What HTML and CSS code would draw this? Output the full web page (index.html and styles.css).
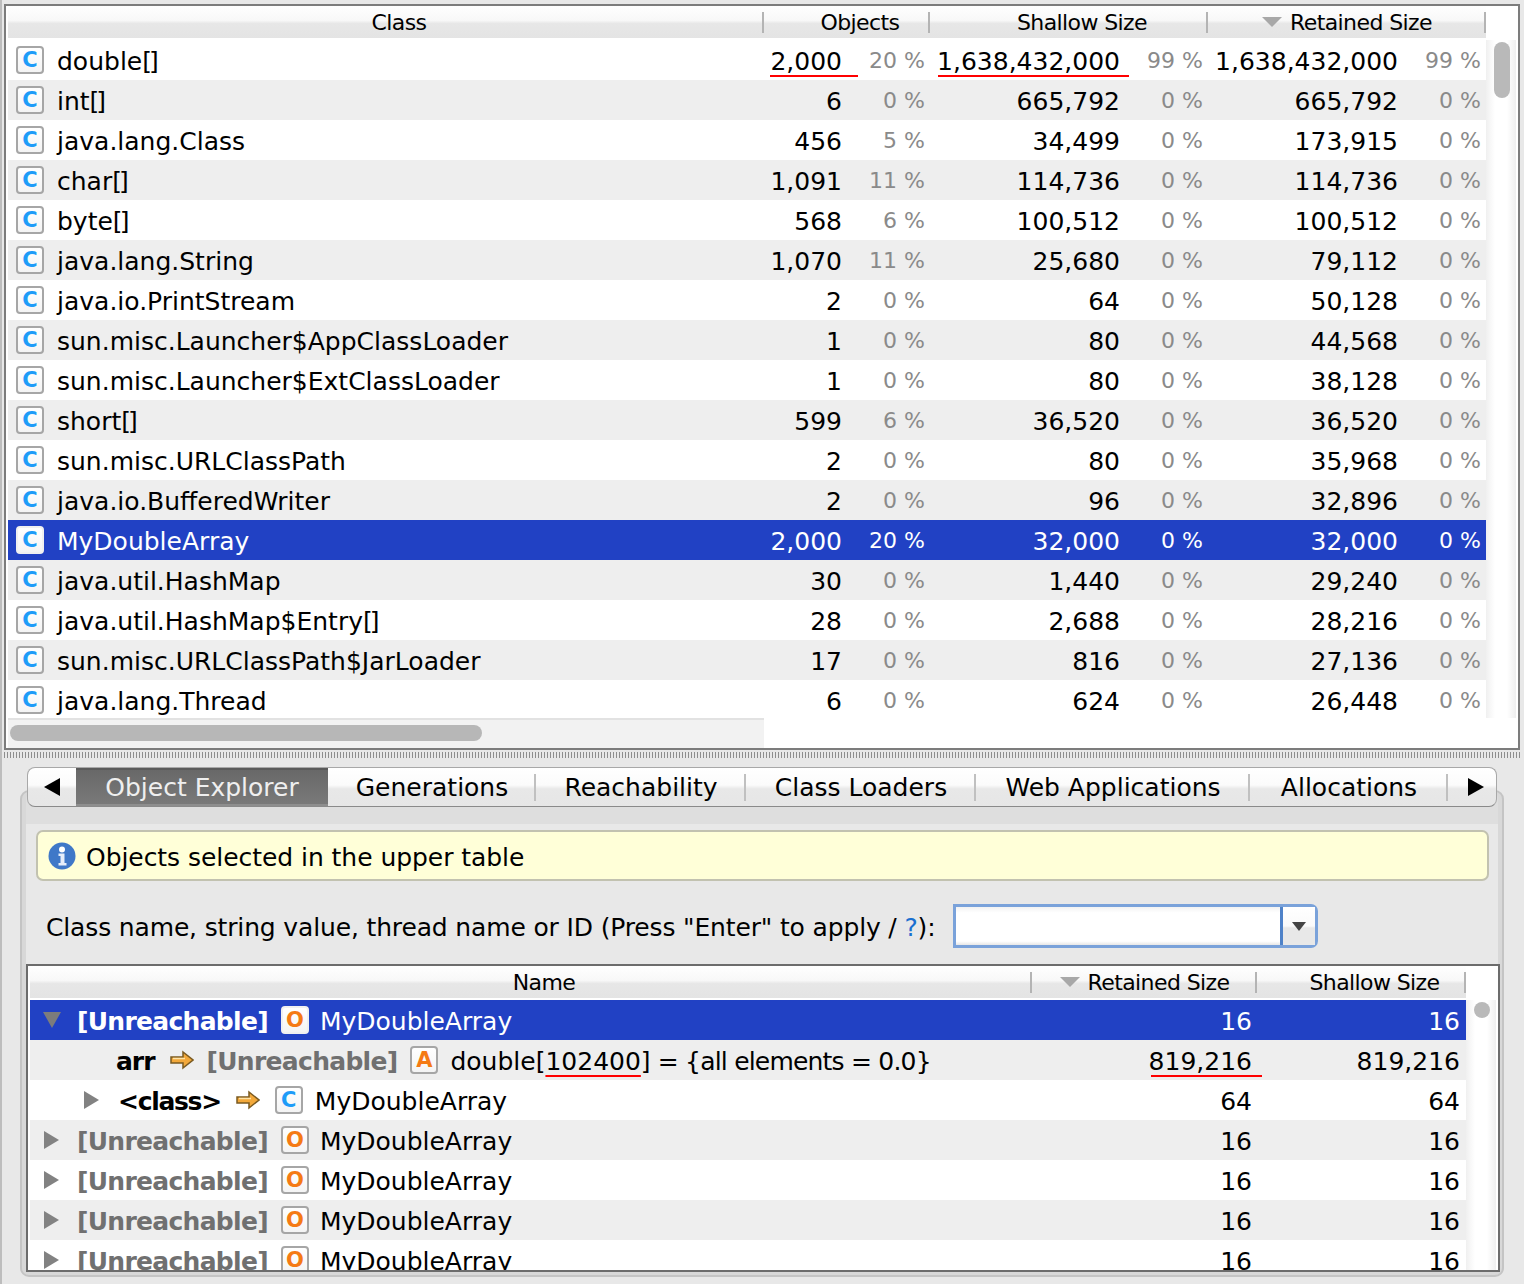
FILE: index.html
```html
<!DOCTYPE html>
<html lang="en">
<head>
    <meta charset="UTF-8">
    <title>Objects</title>
    <link rel="stylesheet" href="styles.css">
</head>
<body>
    <div class="upper">
        <div class="head upper-cols">
            <div class="hcell">Class</div>
            <div class="hcell span2">Objects</div>
            <div class="hcell span2">Shallow Size</div>
            <div class="hcell span2 sorted"><i class="tri-sort"></i>Retained Size</div>
        </div>
        <div class="upper-body">
            <div class="rows">
                <div class="row upper-cols"><div class="name"><b class="ic c">C</b><span>double<span class="br">[</span>]</span></div><div class="num"><span class="red red-a"></span>2,000</div><div class="pct">20 %</div><div class="num"><span class="red red-b"></span>1,638,432,000</div><div class="pct">99 %</div><div class="num">1,638,432,000</div><div class="pct">99 %</div></div>
                <div class="row upper-cols"><div class="name"><b class="ic c">C</b><span>int<span class="br">[</span>]</span></div><div class="num">6</div><div class="pct">0 %</div><div class="num">665,792</div><div class="pct">0 %</div><div class="num">665,792</div><div class="pct">0 %</div></div>
                <div class="row upper-cols"><div class="name"><b class="ic c">C</b>java.lang.Class</div><div class="num">456</div><div class="pct">5 %</div><div class="num">34,499</div><div class="pct">0 %</div><div class="num">173,915</div><div class="pct">0 %</div></div>
                <div class="row upper-cols"><div class="name"><b class="ic c">C</b><span>char<span class="br">[</span>]</span></div><div class="num">1,091</div><div class="pct">11 %</div><div class="num">114,736</div><div class="pct">0 %</div><div class="num">114,736</div><div class="pct">0 %</div></div>
                <div class="row upper-cols"><div class="name"><b class="ic c">C</b><span>byte<span class="br">[</span>]</span></div><div class="num">568</div><div class="pct">6 %</div><div class="num">100,512</div><div class="pct">0 %</div><div class="num">100,512</div><div class="pct">0 %</div></div>
                <div class="row upper-cols"><div class="name"><b class="ic c">C</b>java.lang.String</div><div class="num">1,070</div><div class="pct">11 %</div><div class="num">25,680</div><div class="pct">0 %</div><div class="num">79,112</div><div class="pct">0 %</div></div>
                <div class="row upper-cols"><div class="name"><b class="ic c">C</b>java.io.PrintStream</div><div class="num">2</div><div class="pct">0 %</div><div class="num">64</div><div class="pct">0 %</div><div class="num">50,128</div><div class="pct">0 %</div></div>
                <div class="row upper-cols"><div class="name"><b class="ic c">C</b>sun.misc.Launcher$AppClassLoader</div><div class="num">1</div><div class="pct">0 %</div><div class="num">80</div><div class="pct">0 %</div><div class="num">44,568</div><div class="pct">0 %</div></div>
                <div class="row upper-cols"><div class="name"><b class="ic c">C</b>sun.misc.Launcher$ExtClassLoader</div><div class="num">1</div><div class="pct">0 %</div><div class="num">80</div><div class="pct">0 %</div><div class="num">38,128</div><div class="pct">0 %</div></div>
                <div class="row upper-cols"><div class="name"><b class="ic c">C</b><span>short<span class="br">[</span>]</span></div><div class="num">599</div><div class="pct">6 %</div><div class="num">36,520</div><div class="pct">0 %</div><div class="num">36,520</div><div class="pct">0 %</div></div>
                <div class="row upper-cols"><div class="name"><b class="ic c">C</b>sun.misc.URLClassPath</div><div class="num">2</div><div class="pct">0 %</div><div class="num">80</div><div class="pct">0 %</div><div class="num">35,968</div><div class="pct">0 %</div></div>
                <div class="row upper-cols"><div class="name"><b class="ic c">C</b>java.io.BufferedWriter</div><div class="num">2</div><div class="pct">0 %</div><div class="num">96</div><div class="pct">0 %</div><div class="num">32,896</div><div class="pct">0 %</div></div>
                <div class="row upper-cols selected"><div class="name"><b class="ic c">C</b>MyDoubleArray</div><div class="num">2,000</div><div class="pct">20 %</div><div class="num">32,000</div><div class="pct">0 %</div><div class="num">32,000</div><div class="pct">0 %</div></div>
                <div class="row upper-cols"><div class="name"><b class="ic c">C</b>java.util.HashMap</div><div class="num">30</div><div class="pct">0 %</div><div class="num">1,440</div><div class="pct">0 %</div><div class="num">29,240</div><div class="pct">0 %</div></div>
                <div class="row upper-cols"><div class="name"><b class="ic c">C</b><span>java.util.HashMap$Entry<span class="br">[</span>]</span></div><div class="num">28</div><div class="pct">0 %</div><div class="num">2,688</div><div class="pct">0 %</div><div class="num">28,216</div><div class="pct">0 %</div></div>
                <div class="row upper-cols"><div class="name"><b class="ic c">C</b>sun.misc.URLClassPath$JarLoader</div><div class="num">17</div><div class="pct">0 %</div><div class="num">816</div><div class="pct">0 %</div><div class="num">27,136</div><div class="pct">0 %</div></div>
                <div class="row upper-cols"><div class="name"><b class="ic c">C</b>java.lang.Thread</div><div class="num">6</div><div class="pct">0 %</div><div class="num">624</div><div class="pct">0 %</div><div class="num">26,448</div><div class="pct">0 %</div></div>
            </div>
            <div class="vscroll"><div class="vthumb"></div></div>
        </div>
        <div class="hscroll"><div class="hthumb"></div></div>
    </div>

    <div class="splitter"></div>

    <div class="tabs">
        <div class="tab arrow-tab"><i class="arrow-left"></i></div>
        <div class="tab active">Object Explorer</div>
        <div class="tab">Generations</div>
        <div class="tab">Reachability</div>
        <div class="tab">Class Loaders</div>
        <div class="tab">Web Applications</div>
        <div class="tab">Allocations</div>
        <div class="tab arrow-tab last"><i class="arrow-right"></i></div>
    </div>

    <div class="panel">
        <div class="notice">
            <svg class="info-icon" width="28" height="28" viewBox="0 0 28 28">
                <circle cx="14" cy="14" r="13.5" fill="#3f78c8"/>
                <circle cx="14" cy="7.5" r="3" fill="#fff"/>
                <path d="M10.5 11.5h6v9.500h2v2.500h-8v-2.500h2v-7h-2z" fill="#e6eefa"/>
            </svg>
            <span class="notice-text">Objects selected in the upper table</span>
        </div>
        <div class="filter">
            <label class="filter-label">Class name, string value, thread name or ID (Press "Enter" to apply / <a class="help">?</a>):</label>
            <div class="combo">
                <div class="combo-input"></div>
                <div class="combo-btn"><i class="tri-combo"></i></div>
            </div>
        </div>
        <div class="lower">
            <div class="head lower-cols">
                <div class="hcell">Name</div>
                <div class="hcell sorted"><i class="tri-sort"></i>Retained Size</div>
                <div class="hcell">Shallow Size</div>
            </div>
            <div class="lower-body">
                <div class="rows">
                    <div class="row lower-cols selected"><div class="name tree"><i class="tw open"></i><b class="ref">[Unreachable]</b><b class="ic o">O</b>MyDoubleArray</div><div class="num">16</div><div class="num">16</div></div>
                    <div class="row lower-cols"><div class="name tree lvl2"><b class="fld">arr</b><svg class="go" width="24" height="20" viewBox="0 0 24 20"><path d="M1 7h12V2l10 8-10 8v-5H1z" fill="#f2a83a" stroke="#7a5a20" stroke-width="1.500"/><path d="M3 8.500h12" stroke="#fde3a8" stroke-width="1.500"/></svg><b class="ref">[Unreachable]</b><b class="ic a">A</b><span>double[<span class="red-word">102400</span>]<span class="tail"> = {all elements = 0.0}</span></span></div><div class="num"><span class="red red-c"></span>819,216</div><div class="num">819,216</div></div>
                    <div class="row lower-cols"><div class="name tree lvl3"><i class="tw"></i><b class="fld">&lt;class&gt;</b><svg class="go" width="24" height="20" viewBox="0 0 24 20"><path d="M1 7h12V2l10 8-10 8v-5H1z" fill="#f2a83a" stroke="#7a5a20" stroke-width="1.500"/><path d="M3 8.500h12" stroke="#fde3a8" stroke-width="1.500"/></svg><b class="ic c">C</b>MyDoubleArray</div><div class="num">64</div><div class="num">64</div></div>
                    <div class="row lower-cols"><div class="name tree"><i class="tw"></i><b class="ref">[Unreachable]</b><b class="ic o">O</b>MyDoubleArray</div><div class="num">16</div><div class="num">16</div></div>
                    <div class="row lower-cols"><div class="name tree"><i class="tw"></i><b class="ref">[Unreachable]</b><b class="ic o">O</b>MyDoubleArray</div><div class="num">16</div><div class="num">16</div></div>
                    <div class="row lower-cols"><div class="name tree"><i class="tw"></i><b class="ref">[Unreachable]</b><b class="ic o">O</b>MyDoubleArray</div><div class="num">16</div><div class="num">16</div></div>
                    <div class="row lower-cols"><div class="name tree"><i class="tw"></i><b class="ref">[Unreachable]</b><b class="ic o">O</b>MyDoubleArray</div><div class="num">16</div><div class="num">16</div></div>
                </div>
                <div class="vscroll small"><div class="vthumb"></div></div>
            </div>
        </div>
    </div>
</body>
</html>
```

FILE: styles.css
```css
html, body {
    height: 1284px;
    overflow: hidden;
}
body {
    margin: 0;
    background: #e8e8e8;
    color: #000;
    font-family: "DejaVu Sans", "Liberation Sans", sans-serif;
    font-size: 25px;
    border-left: 2px solid #bdbdbd;
}
i {
    display: block;
}
.upper {
    margin: 4px 4px 0 2px;
    height: 746px;
    box-sizing: border-box;
    border: 2px solid #7c7c7c;
    background: #fff;
    padding: 0 2px;
}
.upper-cols {
    display: grid;
    grid-template-columns: 756px 78px 88px 190px 88px 190px 88px;
}
.lower-cols {
    display: grid;
    grid-template-columns: 1002px 225px 209px;
}
.head {
    height: 32px;
    margin-bottom: 2px;
    width: max-content;
    background: linear-gradient(#fff 0%, #f8f8f8 45%, #e7e7e7 55%, #e4e4e4 100%);
    font-size: 22px;
    letter-spacing: -0.6px;
}
.hcell {
    position: relative;
    display: flex;
    align-items: center;
    justify-content: center;
    padding-left: 26px;
    height: 32px;
    white-space: nowrap;
}
.hcell::after {
    content: "";
    position: absolute;
    right: 0;
    top: 6px;
    height: 21px;
    width: 2px;
    background: #b4b4b4;
}
.span2 {
    grid-column: span 2;
}
.sorted {
    padding-left: 0;
}
.tri-sort {
    width: 0;
    height: 0;
    margin-right: 8px;
    border-left: 10px solid transparent;
    border-right: 10px solid transparent;
    border-top: 10px solid #a8a8a8;
}
.upper-body, .lower-body {
    display: flex;
}
.upper-body {
    height: 678px;
}
.rows {
    flex: none;
    overflow: hidden;
}
.row {
    height: 40px;
    align-items: center;
    background: #fff;
    white-space: nowrap;
}
.row:nth-child(even) {
    background: #eee;
}
.row.selected {
    background: #2141c4;
    color: #fff;
}
.name {
    display: flex;
    align-items: center;
    padding-left: 8px;
    padding-top: 2px;
}
.num {
    position: relative;
    padding-top: 2px;
    text-align: right;
}
.pct {
    text-align: right;
    padding-right: 5px;
    color: #8a8a8a;
    font-size: 22px;
}
.selected .pct {
    color: #fff;
}
.br {
    letter-spacing: -3px;
}
.red {
    position: absolute;
    top: 30px;
    height: 2px;
    background: #f00;
}
.red-a { left: 6px; width: 88px; }
.red-b { left: 8px; width: 191px; }
.red-c { right: -5px; width: 111px; }
.red-word {
    text-decoration: underline 2px #f00;
    text-underline-offset: 5px;
}
.tail {
    letter-spacing: -0.8px;
}
.ic {
    flex: none;
    width: 28px;
    height: 28px;
    box-sizing: border-box;
    margin-top: -2px;
    margin-right: 13px;
    padding-top: 1px;
    border: 2px solid #a6a6a6;
    border-radius: 4px;
    background: linear-gradient(#fff, #f4f4f4);
    display: flex;
    align-items: center;
    justify-content: center;
    font-size: 21px;
    font-weight: bold;
    line-height: 1;
    letter-spacing: 0;
}
.ic.c { color: #1e9cf8; }
.ic.o { color: #f57a14; }
.ic.a { color: #f57a14; }
.selected .ic {
    border-color: #f0f0f0;
}
.vscroll {
    flex: none;
    position: relative;
    width: 30px;
    background: linear-gradient(90deg, #f0f0f0, #fff 30%, #fff 70%, #eee);
}
.vthumb {
    position: absolute;
    left: 8px;
    top: 2px;
    width: 16px;
    height: 56px;
    border-radius: 8px;
    background: #b9b9b9;
}
.vscroll.small .vthumb {
    top: 2px;
    height: 16px;
}
.hscroll {
    position: relative;
    width: 756px;
    height: 30px;
    box-sizing: border-box;
    border-top: 2px solid #e2e2e2;
    background: #f2f2f2;
}
.hthumb {
    position: absolute;
    left: 2px;
    top: 5px;
    width: 472px;
    height: 16px;
    border-radius: 8px;
    background: #b7b7b7;
}
.splitter {
    height: 6px;
    margin: 2px 2px 0 2px;
    background: repeating-linear-gradient(90deg, #8e8e8e 0, #8e8e8e 1px, #e8e8e8 1px, #e8e8e8 3px);
}
.tabs {
    position: relative;
    z-index: 1;
    display: grid;
    grid-template-columns: 48px 252px 208px 210px 230px 274px 198px 48px;
    width: max-content;
    height: 40px;
    margin: 9px 0 0 25px;
    box-sizing: border-box;
    border: 1px solid #a8a8a8;
    border-bottom-color: #8a8a8a;
    border-radius: 8px;
    background: linear-gradient(#fff 0%, #fbfbfb 45%, #e8e8e8 55%, #e6e6e6 100%);
}
.tab {
    position: relative;
    display: flex;
    align-items: center;
    justify-content: center;
    white-space: nowrap;
}
.tab::after {
    content: "";
    position: absolute;
    right: 0;
    top: 6px;
    bottom: 5px;
    width: 2px;
    background: #c0c0c0;
}
.tab.arrow-tab::after, .tab.active::after {
    display: none;
}
.tab.active {
    background: linear-gradient(#676767, #7a7a7a);
    color: #efefef;
    box-shadow: inset 0 2px 0 #5a5a5a, inset 0 -2px 0 #8e8e8e;
}
.tab.last {
    padding-left: 8px;
}
.arrow-left, .arrow-right {
    width: 0;
    height: 0;
    border-top: 9px solid transparent;
    border-bottom: 9px solid transparent;
}
.arrow-left {
    border-right: 16px solid #000;
}
.arrow-right {
    border-left: 16px solid #000;
}
.panel {
    width: 1484px;
    height: 487px;
    margin: -17px 0 0 18px;
    box-sizing: border-box;
    padding: 38px 4px 4px 4px;
    border: 2px solid #c4c4c4;
    border-radius: 9px;
    background: linear-gradient(#dedede 0, #dedede 32px, #e8e8e8 32px);
    box-shadow: inset 4px 0 0 #d8d8d8, inset -4px 0 0 #d8d8d8, inset 0 -4px 0 #d8d8d8;
}
.notice {
    display: flex;
    align-items: center;
    gap: 10px;
    width: 1453px;
    height: 51px;
    margin-left: 10px;
    box-sizing: border-box;
    padding-left: 10px;
    border: 2px solid #c2c2b0;
    border-radius: 7px;
    background: #ffffd8;
    letter-spacing: -0.05px;
}
.notice-text {
    padding-top: 4px;
}
.info-icon {
    flex: none;
}
.filter {
    display: flex;
    align-items: center;
    height: 44px;
    margin: 23px 0 16px 20px;
}
.filter-label {
    width: 907px;
    padding-top: 2px;
    white-space: nowrap;
    letter-spacing: -0.15px;
}
.help {
    color: #1a6fd0;
}
.combo {
    display: flex;
    width: 365px;
    height: 44px;
    box-sizing: border-box;
    border: 3px solid #7aa2da;
    border-radius: 0 7px 7px 0;
}
.combo-input {
    flex: 1;
    background: linear-gradient(#f2f2f2, #fff 15%, #fff 90%, #e6e6e6);
}
.combo-btn {
    width: 35px;
    box-sizing: border-box;
    display: flex;
    align-items: center;
    justify-content: center;
    border-left: 3px solid #4f82c8;
    background: linear-gradient(#fff 0%, #fafafa 50%, #e8e8e8 55%, #e8e8e8 100%);
}
.tri-combo {
    width: 0;
    height: 0;
    border-left: 7px solid transparent;
    border-right: 7px solid transparent;
    border-top: 9px solid #444;
}
.lower {
    width: 1474px;
    height: 308px;
    box-sizing: border-box;
    border: 2px solid #6c6c6c;
    padding-left: 2px;
    background: #fff;
    overflow: hidden;
}
.lower-body {
    height: 272px;
}
.tree {
    position: relative;
    padding-left: 47px;
}
.tree .ref {
    letter-spacing: -0.7px;
}
.tree .ic {
    margin-left: 13px;
    margin-right: 11px;
}
.tree .ic.a {
    margin-right: 12px;
}
.tw {
    position: absolute;
    left: 14px;
    width: 0;
    height: 0;
    margin-top: -2px;
    border-top: 9px solid transparent;
    border-bottom: 9px solid transparent;
    border-left: 15px solid #828282;
}
.tw.open {
    left: 13px;
    border-left: 9px solid transparent;
    border-right: 9px solid transparent;
    border-top: 16px solid #7c7c7c;
    border-bottom: 0;
}
.ref {
    color: #707070;
}
.selected .ref {
    color: #fff;
}
.fld {
    letter-spacing: -1px;
}
.lvl2 {
    padding-left: 86px;
}
.lvl3 {
    padding-left: 88px;
}
.lvl3 .fld {
    letter-spacing: -1.3px;
}
.lvl3 .tw {
    left: 54px;
}
.go {
    flex: none;
    margin: -2px 13px 0 15px;
}
.tree.lvl3 .ic {
    margin-left: 2px;
    margin-right: 12px;
}
.lower .num:last-child {
    padding-right: 6px;
}
.lower .num:nth-child(2) {
    padding-right: 5px;
}
```
